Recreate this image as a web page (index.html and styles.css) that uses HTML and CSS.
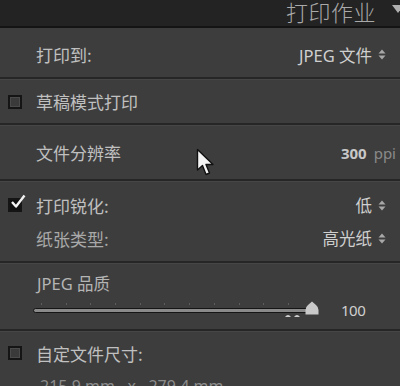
FILE: index.html
```html
<!DOCTYPE html>
<html lang="zh">
<head>
<meta charset="utf-8">
<link rel="stylesheet" href="styles.css">
</head>
<body>
<div class="panel">
  <header class="hdr">
    <span class="title">打印作业</span>
    <svg class="hdr-tri" width="12" height="10" viewBox="0 0 12 10"><path d="M0 1 L12 1 L6 9 Z" fill="#b0b0b0"/></svg>
  </header>

  <div class="row r-print">
    <span class="label">打印到:</span>
    <span class="val">JPEG 文件<svg class="ud" width="8" height="11" viewBox="0 0 8 11"><path d="M0.5 4.5 L4 0.5 L7.5 4.5 Z M0.5 6.5 L4 10.5 L7.5 6.5 Z" fill="#a8a8a8"/></svg></span>
  </div>
  <div class="sep"></div>

  <div class="row r-draft">
    <span class="cb"></span>
    <span class="label">草稿模式打印</span>
  </div>
  <div class="sep"></div>

  <div class="row r-res">
    <span class="label">文件分辨率</span>
    <span class="val"><b class="num">300</b><span class="unit">ppi</span></span>
  </div>
  <div class="sep"></div>

  <div class="group g-sharp">
    <div class="row r-sharp">
      <span class="cb checked"><svg class="tick" width="16" height="16" viewBox="0 0 16 16"><path d="M2 8 L6 12.5 L14.5 1.5" fill="none" stroke="#f2f2f2" stroke-width="2.4" stroke-linejoin="round"/></svg></span>
      <span class="label">打印锐化:</span>
      <span class="val">低<svg class="ud" width="8" height="11" viewBox="0 0 8 11"><path d="M0.5 4.5 L4 0.5 L7.5 4.5 Z M0.5 6.5 L4 10.5 L7.5 6.5 Z" fill="#a8a8a8"/></svg></span>
    </div>
    <div class="row r-paper">
      <span class="label dim">纸张类型:</span>
      <span class="val">高光纸<svg class="ud" width="8" height="11" viewBox="0 0 8 11"><path d="M0.5 4.5 L4 0.5 L7.5 4.5 Z M0.5 6.5 L4 10.5 L7.5 6.5 Z" fill="#a8a8a8"/></svg></span>
    </div>
  </div>
  <div class="sep"></div>

  <div class="group g-quality">
    <div class="q-label">JPEG 品质</div>
    <div class="slider-row">
      <div class="slider">
        <div class="ticks"><i></i><i></i><i></i><i></i><i></i><i></i><i></i><i></i><i></i><i></i><i></i></div>
        <div class="track"></div>
        <svg class="marks" width="16" height="4" viewBox="0 0 16 4"><path d="M0 4 Q3 0 6 4 Z M9 4 Q12 0 15 4 Z" fill="#cfcfcf"/></svg>
        <svg class="thumb" width="14" height="14" viewBox="0 0 14 14"><path d="M7 0.5 L11 4 Q13.5 6 13.5 9 L13.5 13.5 L0.5 13.5 L0.5 9 Q0.5 6 3 4 Z" fill="#c9c9c9"/></svg>
      </div>
      <span class="qval">100</span>
    </div>
  </div>
  <div class="sep"></div>

  <div class="row r-custom">
    <span class="cb"></span>
    <span class="label">自定文件尺寸:</span>
  </div>
  <div class="dims">215.9 mm &nbsp; x &nbsp; 279.4 mm</div>

  <svg class="cursor" width="20" height="30" viewBox="0 0 20 30"><path d="M1.5 1.5 L1.5 22 L6.5 17.5 L10 26.5 L13.5 25 L10 16.5 L17 16.5 Z" fill="#f4f4f4" stroke="#111" stroke-width="1.4" stroke-linejoin="round"/></svg>
</div>
</body>
</html>
```

FILE: styles.css
```css
* { box-sizing: border-box; }
html, body { margin: 0; padding: 0; }
body {
  background: #3d3d3d;
  font-family: "Noto Sans", "Noto Sans CJK SC", sans-serif;
  color: #c4c4c4;
  width: 400px;
  height: 386px;
  overflow: hidden;
}
.panel {
  position: relative;
  width: 400px;
  height: 386px;
  display: flex;
  flex-direction: column;
  background: #3d3d3d;
}
.hdr {
  height: 28px;
  background: #232323;
  border-bottom: 2px solid #141414;
  display: flex;
  align-items: flex-start;
  justify-content: flex-end;
  flex-shrink: 0;
}
.title {
  font-family: "Noto Sans CJK SC", sans-serif;
  font-size: 22px;
  font-weight: 300;
  color: #a9a9a9;
  letter-spacing: 0.5px;
  margin-right: 16px;
  line-height: 22px;
  margin-top: 0;
}
.hdr-tri { margin-right: -4px; margin-top: 4px; }

.row {
  display: flex;
  align-items: center;
  padding-left: 36px;
  padding-right: 14px;
  flex-shrink: 0;
  position: relative;
}
.label {
  font-family: "Noto Sans CJK SC", sans-serif;
  font-size: 17px;
  color: #c0c0c0;
  flex: 1;
}
.label.dim { color: #a9a9a9; }
.val {
  display: flex;
  align-items: center;
  font-family: "Noto Sans", "Noto Sans CJK SC", sans-serif;
  font-size: 16.5px;
  color: #cfcfcf;
}
.ud { margin-left: 6px; }
.sep {
  background: #262626;
  border-bottom: 1px solid #464646;
  height: 3px;
  flex-shrink: 0;
}
.r-print { height: 49px; padding-top: 4px; }
.r-draft { height: 43px; }
.r-res { height: 53px; padding-right: 4px; }
.num { font-weight: 700; color: #c8c8c8; font-size: 15px; }
.unit { color: #8a8a8a; font-size: 15px; margin-left: 7px; }

.cb {
  position: absolute;
  left: 8px;
  top: 50%;
  margin-top: -7px;
  width: 14px;
  height: 14px;
  border: 2px solid #151515;
  background: #3a3a3a;
  box-shadow: inset 0 0 0 1px #4a4a4a;
}
.cb.checked { background: #0d0d0d; box-shadow: none; }
.tick { position: absolute; left: 0; top: -6px; }

.group { flex-shrink: 0; }
.g-sharp { height: 79px; padding-top: 7px; }
.r-sharp { height: 32px; }
.r-paper { height: 34px; }

.g-quality { height: 65px; padding-left: 33px; padding-top: 9px; }
.q-label {
  padding-left: 4px;
  font-size: 16.5px;
  color: #b4b4b4;
  font-family: "Noto Sans", "Noto Sans CJK SC", sans-serif;
  line-height: 22px;
}
.slider-row { display: flex; align-items: center; margin-top: 3px; height: 24px; }
.slider { position: relative; width: 286px; height: 24px; }
.ticks {
  position: absolute; left: 8px; right: 30px; top: 5px;
  display: flex; justify-content: space-between;
}
.ticks i { display: block; width: 1px; height: 2px; background: #5c5c5c; }
.track {
  position: absolute; left: 0; right: 4px; top: 10px;
  height: 5px; border-radius: 3px;
  background: #8a8a8a;
  border: 1px solid #151515;
}
.marks { position: absolute; left: 252px; top: 15px; }
.thumb { position: absolute; right: 0; top: 3px; }
.qval { margin-left: 22px; font-size: 15px; color: #d0d0d0; letter-spacing: -0.5px; }

.r-custom { height: 42px; }
.dims {
  padding-left: 40px;
  font-size: 16px;
  color: #8c8c8c;
  line-height: 20px;
  margin-top: 2px;
}
.cursor { position: absolute; left: 196px; top: 148px; }
```
